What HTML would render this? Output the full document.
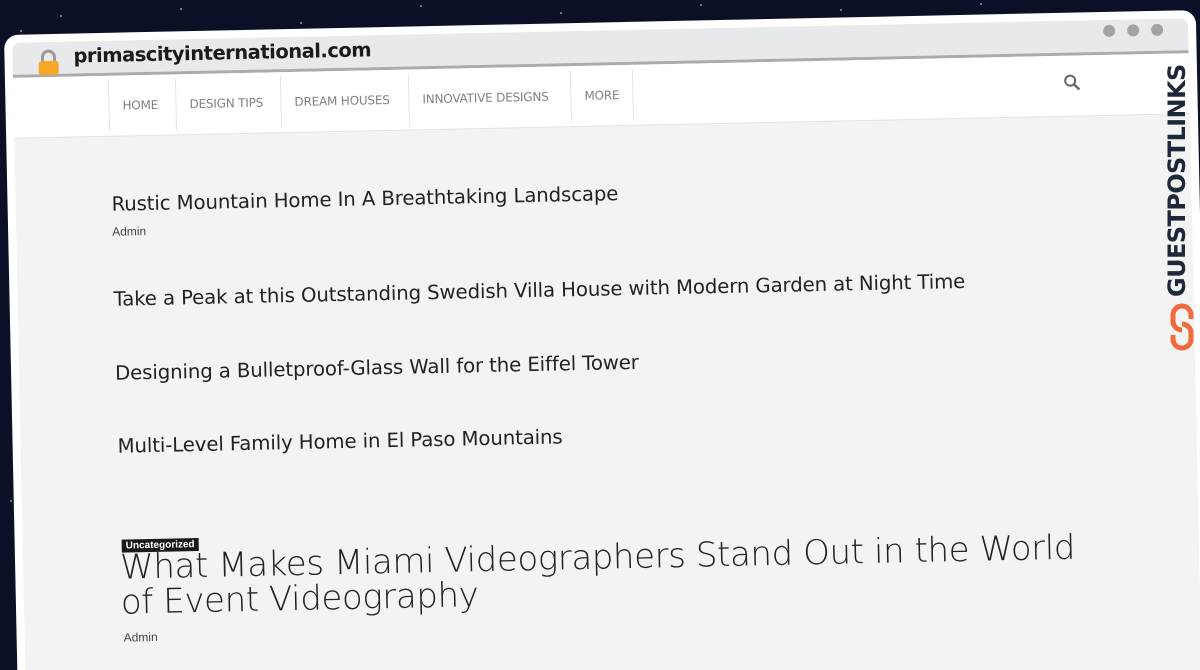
<!DOCTYPE html>
<html><head><meta charset="utf-8"><style>
*{margin:0;padding:0;box-sizing:border-box}
html,body{width:1200px;height:670px;overflow:hidden}
body{background:#0b1026;position:relative;font-family:"DejaVu Sans","Liberation Sans",sans-serif}
#clip{position:absolute;left:0;top:0;width:1200px;height:670px;overflow:hidden}
.star{position:absolute;width:2px;height:2px;background:#8a90a8;border-radius:50%}
#win{position:absolute;left:0;top:0;width:1192px;height:680px;transform-origin:0 0;transform:translate(4px,35px) rotate(-1.2deg);background:#fff;border-radius:14px;overflow:hidden}
#inner{position:absolute;left:8px;top:8px;right:8px;bottom:0;background:#f3f3f3;border-radius:8px 8px 0 0;overflow:hidden}
.abs{position:absolute;white-space:nowrap}
#bar{position:absolute;left:0;top:0;right:0;height:35px;background:#e8e9eb;border-bottom:3px solid #a9abaf}
#nav{position:absolute;left:0;top:35px;right:0;height:61px;background:#fff;border-bottom:1px solid #e2e2e2}
.ni{position:absolute;top:4px;height:52px;border-left:1px solid #e6e6e6;font-size:12px;color:#808080;line-height:52px;padding:0 13px;font-family:"DejaVu Sans",sans-serif;letter-spacing:-0.2px}
.t{font-size:19.7px;color:#222;font-weight:400;letter-spacing:-0.1px}
.adm{font-size:12px;color:#444;font-family:"Liberation Sans",sans-serif}
</style></head><body><div id="clip">
<div class="star" style="left:60px;top:15px"></div><div class="star" style="left:180px;top:8px"></div><div class="star" style="left:300px;top:22px"></div><div class="star" style="left:420px;top:5px"></div><div class="star" style="left:560px;top:12px"></div><div class="star" style="left:700px;top:4px"></div><div class="star" style="left:840px;top:9px"></div><div class="star" style="left:980px;top:3px"></div><div class="star" style="left:20px;top:30px"></div><div class="star" style="left:10px;top:500px"></div>
<div id="win"><div id="inner">
 <div id="bar">
  <svg class="abs" style="left:25px;top:7px" width="22" height="28" viewBox="0 0 22 28"><path d="M5 13V8a6 6 0 0 1 12 0v5" fill="none" stroke="#9a9a9a" stroke-width="3"/><rect x="1" y="12" width="20" height="14" rx="3" fill="#f6a623"/></svg>
  <div class="abs" style="left:61px;top:3px;font-size:19.5px;font-weight:600;color:#1b1b1b;font-family:'DejaVu Sans',sans-serif;letter-spacing:-0.5px">primascityinternational.com</div>
  <div class="abs" style="left:1091px;top:5px;width:12px;height:12px;border-radius:50%;background:#a3a3a3"></div>
  <div class="abs" style="left:1115px;top:5px;width:12px;height:12px;border-radius:50%;background:#a3a3a3"></div>
  <div class="abs" style="left:1139px;top:5px;width:12px;height:12px;border-radius:50%;background:#a3a3a3"></div>
 </div>
 <div id="nav">
  <div class="ni" style="left:95px">HOME</div>
  <div class="ni" style="left:162px">DESIGN TIPS</div>
  <div class="ni" style="left:267px">DREAM HOUSES</div>
  <div class="ni" style="left:395px">INNOVATIVE DESIGNS</div>
  <div class="ni" style="left:557px;border-right:1px solid #e6e6e6">MORE</div>
  <svg class="abs" style="left:1050px;top:18px" width="18" height="18" viewBox="0 0 18 18"><circle cx="7" cy="7" r="5" fill="none" stroke="#666" stroke-width="2"/><path d="M11 11l5 5" stroke="#666" stroke-width="2.4"/></svg>
 </div>
 <div class="abs t" style="left:96px;top:152px">Rustic Mountain Home In A Breathtaking Landscape</div>
 <div class="abs adm" style="left:96px;top:184px">Admin</div>
 <div class="abs t" style="left:96px;top:247px">Take a Peak at this Outstanding Swedish Villa House with Modern Garden at Night Time</div>
 <div class="abs t" style="left:96px;top:321px">Designing a Bulletproof-Glass Wall for the Eiffel Tower</div>
 <div class="abs t" style="left:97px;top:394px">Multi-Level Family Home in El Paso Mountains</div>
 <div class="abs" style="left:99px;top:499px;background:#1a1a1a;color:#fff;font-size:10px;padding:1px 4px;font-family:'Liberation Sans',sans-serif;font-weight:bold">Uncategorized</div>
 <div class="abs" style="left:97px;top:510px;font-size:34px;font-weight:200;color:#222;line-height:35px;letter-spacing:-0.4px">What Makes Miami Videographers Stand Out in the World<br>of Event Videography</div>
 <div class="abs adm" style="left:99px;top:590px">Admin</div>
</div></div>
<div class="abs" style="left:1162px;top:297px;transform-origin:0 0;transform:rotate(-90deg);font-size:24px;font-weight:bold;color:#1e2838;font-family:'DejaVu Sans',sans-serif;letter-spacing:-0.6px;line-height:30px;width:240px">GUESTPOSTLINKS</div>
<svg class="abs" style="left:1168px;top:302px" width="28" height="50" viewBox="0 0 28 50"><path d="M14 4a9 9 0 0 0-9 9v6a9 9 0 0 0 9 9M14 4a9 9 0 0 1 9 9v4M14 46a9 9 0 0 0 9-9v-6a9 9 0 0 0-9-9M14 46a9 9 0 0 1-9-9v-4" fill="none" stroke="#f26a3c" stroke-width="5"/></svg>
</div></body></html>
